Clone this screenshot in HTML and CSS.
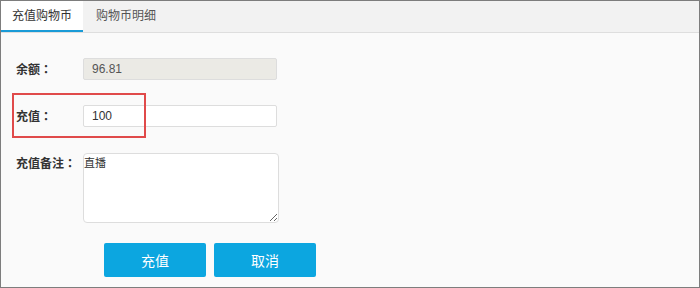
FILE: index.html
```html
<!DOCTYPE html>
<html lang="zh-CN">
<head>
    <meta charset="UTF-8">
    <meta name="viewport" content="width=device-width, initial-scale=1.0">
    <title>充值购物币</title>
    <link rel="stylesheet" href="styles.css">
</head>
<body>
    <div class="frame">
        <div class="tabs">
            <a class="tab active" href="#">充值购物币</a>
            <a class="tab" href="#">购物币明细</a>
        </div>
        <form class="recharge-form">
            <div class="row">
                <label class="label" for="balance">余额<span class="colon" lang="ja">：</span></label>
                <input class="field" id="balance" type="text" value="96.81" disabled>
            </div>
            <div class="row row-marked">
                <label class="label" for="amount">充值<span class="colon" lang="ja">：</span></label>
                <input class="field field-dark" id="amount" type="text" value="100">
                <span class="mark"></span>
            </div>
            <div class="row row-top">
                <label class="label" for="remark">充值备注<span class="colon" lang="ja">：</span></label>
                <textarea class="field memo" id="remark">直播</textarea>
            </div>
            <div class="actions">
                <button type="submit" class="btn">充值</button>
                <button type="button" class="btn">取消</button>
            </div>
        </form>
    </div>
</body>
</html>
```

FILE: styles.css
```css
* {
    box-sizing: border-box;
}
body {
    margin: 0;
    font-family: "Noto Sans CJK SC", "Liberation Sans", sans-serif;
    color: #333;
}
.frame {
    width: 700px;
    height: 288px;
    border: 1px solid #7d7d7d;
    background-color: #fafafa;
}
.tabs {
    display: flex;
    height: 32px;
    background-color: #f2f2f2;
    border-bottom: 1px solid #dedede;
}
.tab {
    display: block;
    height: 31px;
    line-height: 28px;
    padding: 0 11px;
    font-size: 12px;
    color: #555;
    text-decoration: none;
}
.tab + .tab {
    padding-left: 13px;
}
.tab.active {
    background-color: #fff;
    color: #333;
    border-bottom: 2px solid #1a9bd7;
}
.recharge-form {
    padding: 25px 0 0 15px;
}
.row {
    display: flex;
    align-items: center;
    margin-bottom: 25px;
}
.row-marked {
    position: relative;
    margin-bottom: 26px;
}
.row-top {
    align-items: flex-start;
    margin-bottom: 20px;
}
.label {
    width: 67px;
    font-size: 12px;
    font-weight: bold;
    color: #333;
    padding-bottom: 2px;
}
.colon {
    font-family: "Noto Sans CJK JP", sans-serif;
}
.row-top .label {
    padding-top: 1px;
}
.field {
    width: 194px;
    height: 22px;
    padding: 0 8px;
    border: 1px solid #ddd;
    border-radius: 2px;
    background-color: #fff;
    font-family: "Liberation Sans", "Noto Sans CJK SC", sans-serif;
    font-size: 12px;
    color: #555;
    outline: none;
}
.field:disabled {
    background-color: #ebeae5;
    color: #555;
}
.field-dark {
    color: #333;
}
.memo {
    width: 196px;
    height: 70px;
    padding: 0;
    border-radius: 4px;
    font-family: "Noto Sans CJK SC", sans-serif;
    font-size: 11px;
    line-height: 16px;
    color: #333;
    resize: vertical;
}
.mark {
    position: absolute;
    left: -4px;
    top: -12px;
    width: 134px;
    height: 45px;
    border: 2px solid #e04a4a;
    pointer-events: none;
}
.actions {
    display: flex;
    gap: 8px;
    padding-left: 88px;
}
.btn {
    width: 102px;
    height: 34px;
    border: none;
    border-radius: 2px;
    background-color: #0ca6e0;
    color: #fff;
    font-family: "Noto Sans CJK SC", sans-serif;
    font-size: 14px;
    cursor: pointer;
}
.btn:hover {
    background-color: #0993c6;
}
```
